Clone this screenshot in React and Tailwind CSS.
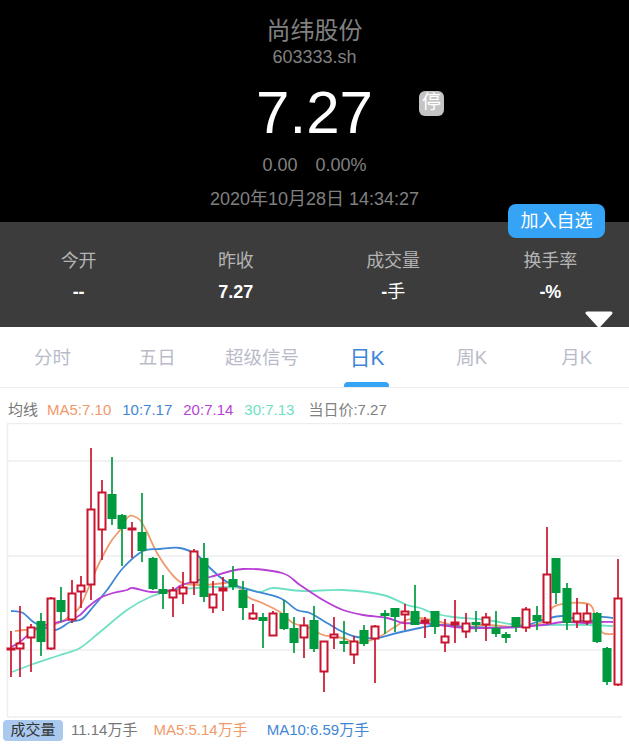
const FONT = "font-['Liberation_Sans','Noto_Sans_CJK_SC',sans-serif]"

// x, wick top, wick bottom, body top, body bottom, up (red hollow) or down (green solid)
const candles = [
  [11, 631, 677, 648, 650, 1], [20, 606, 677, 643, 649, 1], [31, 624, 672, 627, 638, 1], [41, 613, 656, 621, 642, 0],
  [51, 597, 650, 598, 649, 1], [61, 587, 622, 600, 612, 0], [72, 580, 623, 593, 620, 1], [81, 576, 608, 585, 592, 1],
  [91, 448, 600, 509, 585, 1], [102, 480, 560, 492, 530, 1], [112, 457, 525, 494, 519, 0], [122, 514, 566, 515, 529, 0],
  [132, 522, 558, 528, 530, 1], [142, 493, 562, 532, 551, 0], [153, 557, 590, 558, 589, 0], [163, 575, 609, 589, 594, 0],
  [173, 587, 617, 590, 598, 1], [183, 572, 604, 587, 594, 1], [194, 549, 595, 551, 583, 1], [204, 543, 602, 558, 597, 0],
  [213, 581, 613, 594, 608, 1], [223, 577, 611, 588, 591, 1], [233, 566, 590, 579, 587, 0], [243, 581, 620, 590, 608, 0],
  [253, 604, 620, 613, 619, 1], [263, 613, 648, 617, 621, 0], [273, 611, 636, 613, 636, 1], [284, 600, 630, 613, 629, 0],
  [294, 617, 653, 628, 643, 0], [304, 617, 658, 625, 638, 1], [314, 606, 652, 620, 649, 0], [324, 641, 692, 641, 672, 1],
  [334, 617, 649, 634, 638, 1], [344, 621, 652, 641, 644, 0], [354, 636, 664, 641, 655, 1], [364, 625, 646, 630, 644, 0],
  [375, 625, 683, 626, 639, 1], [385, 610, 634, 613, 616, 0], [395, 608, 632, 608, 617, 0], [405, 604, 630, 611, 615, 1],
  [415, 585, 625, 611, 625, 0], [425, 617, 638, 620, 623, 1], [435, 611, 634, 611, 627, 0], [445, 619, 652, 636, 643, 1],
  [455, 600, 643, 622, 625, 1], [466, 613, 638, 623, 632, 1], [476, 611, 632, 622, 625, 0], [486, 613, 641, 617, 625, 1],
  [496, 611, 637, 628, 634, 0], [506, 632, 643, 634, 638, 0], [516, 617, 632, 617, 627, 0], [526, 607, 632, 609, 628, 1],
  [537, 606, 630, 615, 621, 0], [547, 527, 624, 574, 623, 1], [556, 558, 604, 558, 593, 0], [567, 583, 630, 588, 623, 0],
  [577, 598, 628, 613, 622, 1], [587, 604, 625, 613, 622, 1], [597, 612, 643, 613, 642, 0], [607, 647, 685, 648, 682, 0],
  [618, 559, 686, 598, 685, 1],
]

const ma5 = '15,631 25,630 40,629 61,622 72,614 81,605 96,570 110,543 120,530 128,517 133,516 140,520 147,532 157,553 170,572 182,583 200,585 225,583 233,582 248,597 260,602 280,612 293,623 310,628 323,635 343,638 357,643 377,638 393,628 407,620 420,618 440,622 463,627 487,625 517,627 543,622 552,608 563,604 583,603 592,607 597,623 603,633 613,634'
const ma10 = '11,611 23,613 35,623 55,630 70,622 82,619 93,607 107,590 123,568 143,551 160,549 180,548 197,555 210,568 227,582 250,590 280,598 297,610 310,613 327,623 343,632 357,637 377,638 397,633 420,628 440,625 470,627 517,627 543,620 563,616 587,622 600,617 613,618'
const ma20 = '11,647 20,642 37,628 55,623 77,617 88,607 100,598 113,593 127,590 133,588 152,592 173,590 182,585 210,577 243,569 282,573 300,585 323,600 343,610 363,615 387,618 403,623 420,623 440,625 463,628 487,628 517,627 543,625 563,622 587,623 600,622 613,622'
const ma30 = '12,672 33,664 60,655 80,648 100,632 127,610 150,597 173,590 197,588 210,587 243,588 260,592 273,588 303,591 343,590 383,595 407,605 420,608 433,613 453,617 487,620 517,625 547,625 587,625 613,626'

// page coordinates minus the chart's top edge
const TOP = 423

function smooth(points) {
  const p = points.split(' ').map((s) => s.split(',').map(Number)).map(([x, y]) => [x, y - TOP])
  let d = `M${p[0][0]} ${p[0][1]}`
  for (let i = 1; i < p.length; i++) {
    const a = p[i - 2] || p[i - 1]
    const b = p[i - 1]
    const c = p[i]
    const e = p[i + 1] || c
    d += ` C${b[0] + (c[0] - a[0]) / 6} ${b[1] + (c[1] - a[1]) / 6} ${c[0] - (e[0] - b[0]) / 6} ${c[1] - (e[1] - b[1]) / 6} ${c[0]} ${c[1]}`
  }
  return d
}

function Chart() {
  return (
    <svg width="629" height="296" className="block">
      <g stroke="#eeeeee" strokeWidth="1.5" fill="none">
        <path d="M7.5 0V294" />
        <path d="M7 0.5H622" />
        <path d="M7 38H622" />
        <path d="M7 133H622" />
        <path d="M7 227H622" />
        <path d="M7 294H622" />
      </g>
      <g fill="none" strokeWidth="1.8">
        <path d={smooth(ma30)} stroke="#6fe0c4" />
        <path d={smooth(ma5)} stroke="#f09a6c" />
        <path d={smooth(ma10)} stroke="#3f86d6" />
        <path d={smooth(ma20)} stroke="#b83fd6" />
      </g>
      {candles.map(([x, wt, wb, bt, bb, up]) => {
        const color = up ? '#c9142f' : '#009a3e'
        return (
          <g key={x}>
            <path d={`M${x} ${wt - TOP}V${wb - TOP}`} stroke={color} strokeWidth="1.7" />
            {up ? (
              <rect x={x - 3.5} y={bt - TOP + 0.5} width="7" height={Math.max(bb - bt - 1, 1)} fill="#ffffff" stroke={color} strokeWidth="2" />
            ) : (
              <rect x={x - 4.5} y={bt - TOP} width="9" height={bb - bt} fill={color} />
            )}
          </g>
        )
      })}
    </svg>
  )
}

export default function App() {
  const stats = [
    ['今开', '--'],
    ['昨收', '7.27'],
    ['成交量', <>-<span className="font-normal">手</span></>],
    ['换手率', '-%'],
  ]
  const tabs = ['分时', '五日', '超级信号', '日K', '周K', '月K']

  return (
    <div className={`relative w-[629px] h-[744px] overflow-hidden bg-white ${FONT}`}>
      <div className="relative h-[222px] bg-black flex flex-col items-center pt-[16px]">
        <div className="text-[24px] leading-[29px] text-[#808080]">尚纬股份</div>
        <div className="text-[18px] leading-[24px] text-[#808080]">603333.sh</div>
        <div className="mt-[10px] text-[60px] leading-[68px] text-white">7.27</div>
        <div className="mt-[6px] flex gap-[18px] text-[18px] leading-[24px] text-[#808080]">
          <span>0.00</span>
          <span>0.00%</span>
        </div>
        <div className="mt-[10px] text-[18px] leading-[24px] text-[#808080]">2020年10月28日 14:34:27</div>
        <span className="absolute left-[419px] top-[91px] w-[25px] h-[25px] rounded-md bg-[#c4c4c4] flex items-center justify-center text-[19px] text-white">停</span>
      </div>

      <button className="absolute z-10 left-[508px] top-[204px] w-[97px] h-[34px] rounded-lg bg-[#35a4f7] text-[18px] text-white">加入自选</button>

      <div className="relative h-[105px] bg-[#3c3c3c] grid grid-cols-4 pt-[26px]">
        {stats.map(([label, value]) => (
          <div key={label} className="flex flex-col items-center">
            <span className="text-[18px] leading-[26px] text-[#b4b4b4]">{label}</span>
            <span className="mt-[5px] text-[18px] leading-[26px] font-bold text-white">{value}</span>
          </div>
        ))}
        <svg width="28" height="17" className="absolute left-[585px] top-[89px]">
          <path d="M2 2H26L14 15Z" fill="#ffffff" stroke="#ffffff" strokeWidth="3" strokeLinejoin="round" />
        </svg>
      </div>

      <div className="h-[61px] grid grid-cols-6 border-b border-[#eeeeee]">
        {tabs.map((t) => (
          <div key={t} className="relative flex items-center justify-center pt-[2px]">
            <span className={t === '日K' ? 'text-[21px] text-[#3d86d6]' : 'text-[18.5px] text-[#b9bbc9]'}>{t}</span>
            {t === '日K' && <span className="absolute bottom-[0px] left-[29px] w-[45px] h-[5px] rounded-t-sm bg-[#35a4f7]" />}
          </div>
        ))}
      </div>

      <div className="h-[35px] pl-[8px] pt-[12px] flex gap-[11px] text-[15px] leading-[20px] whitespace-nowrap">
        <span className="-mr-[2px] text-[#777777]">均线</span>
        <span className="text-[#f09a6c]">MA5:7.10</span>
        <span className="text-[#3f86d6]">10:7.17</span>
        <span className="text-[#b83fd6]">20:7.14</span>
        <span className="text-[#6fe0c4]">30:7.13</span>
        <span className="ml-[3px] text-[#808080]">当日价:7.27</span>
      </div>

      <Chart />

      <div className="absolute left-[3px] top-[720px] w-[60px] h-[21px] rounded bg-[#a9c9ee] flex items-center justify-center text-[15px] text-[#333333]">成交量</div>
      <div className="absolute left-[71px] top-[720px] flex gap-[16px] text-[15px] leading-[20px] whitespace-nowrap">
        <span className="text-[#777777]">11.14万手</span>
        <span className="text-[#f09a6c]">MA5:5.14万手</span>
        <span className="ml-[3px] text-[#3f86d6]">MA10:6.59万手</span>
      </div>
    </div>
  )
}
